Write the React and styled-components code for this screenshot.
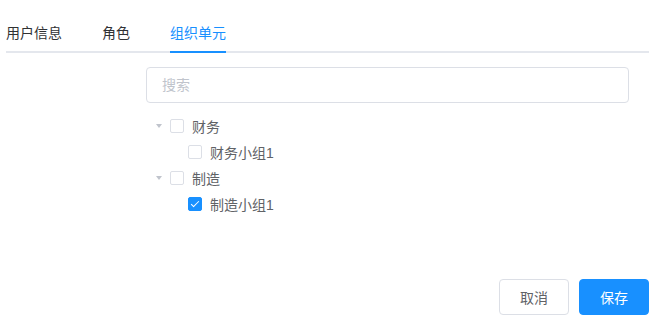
import React, { useState } from "react"
import styled, { createGlobalStyle } from "styled-components"

const GlobalStyle = createGlobalStyle`
  html, body {
    margin: 0;
    padding: 0;
    background: #fff;
  }
  body {
    font-family: "Liberation Sans", "Noto Sans CJK SC", sans-serif;
    font-size: 14px;
    color: #606266;
  }
`

const Page = styled.div`
  height: 321px;
  box-sizing: border-box;
  padding: 13px 11px 6px 6px;
  display: flex;
  flex-direction: column;
`

const TabNav = styled.div`
  position: relative;
  display: flex;
  height: 40px;
  margin-bottom: 14px;

  &::after {
    content: "";
    position: absolute;
    left: 0;
    right: 0;
    bottom: 0;
    height: 2px;
    background: #e4e7ed;
  }
`

const Tab = styled.div`
  position: relative;
  padding: 0 20px;
  height: 40px;
  line-height: 40px;
  font-size: 14px;
  color: ${(p) => (p.$active ? "#1890ff" : "#303133")};
  cursor: pointer;

  &:first-child {
    padding-left: 0;
  }

  &::after {
    content: "";
    display: ${(p) => (p.$active ? "block" : "none")};
    position: absolute;
    left: 20px;
    right: 20px;
    bottom: 0;
    height: 2px;
    background: #1890ff;
    z-index: 1;
  }
`

const Body = styled.div`
  padding-left: 140px;
  padding-right: 20px;
`

const SearchInput = styled.input`
  display: block;
  width: 100%;
  box-sizing: border-box;
  height: 36px;
  padding: 0 15px;
  border: 1px solid #dcdfe6;
  border-radius: 4px;
  font-family: inherit;
  font-size: 14px;
  color: #606266;
  outline: none;

  &::placeholder {
    color: #c0c4cc;
  }
`

const Tree = styled.div`
  margin-top: 10px;
`

const NodeRow = styled.div`
  display: flex;
  align-items: center;
  height: 26px;
  padding-left: ${(p) => p.$level * 18}px;
  color: #606266;
  font-size: 14px;
`

const Expand = styled.span`
  width: 24px;
  height: 24px;
  display: flex;
  align-items: center;
  justify-content: center;

  &::before {
    content: "";
    display: ${(p) => (p.$leaf ? "none" : "block")};
    width: 0;
    height: 0;
    border-left: 3px solid transparent;
    border-right: 3px solid transparent;
    border-top: 4px solid #c0c4cc;
    margin-left: 1px;
  }
`

const Box = styled.span`
  position: relative;
  width: 14px;
  height: 14px;
  box-sizing: border-box;
  border: 1px solid ${(p) => (p.$checked ? "#1890ff" : "#dcdfe6")};
  background: ${(p) => (p.$checked ? "#1890ff" : "#fff")};
  border-radius: 2px;
  margin-right: 8px;

  &::after {
    content: "";
    display: ${(p) => (p.$checked ? "block" : "none")};
    position: absolute;
    left: 4px;
    top: 1px;
    width: 3px;
    height: 7px;
    border: 1px solid #fff;
    border-left: 0;
    border-top: 0;
    transform: rotate(45deg);
  }
`

const Footer = styled.div`
  margin-top: auto;
  display: flex;
  justify-content: flex-end;
  gap: 10px;
`

const Button = styled.button`
  height: 36px;
  padding: 0 20px;
  border-radius: 4px;
  font-family: inherit;
  font-size: 14px;
  border: 1px solid ${(p) => (p.$primary ? "#1890ff" : "#dcdfe6")};
  background: ${(p) => (p.$primary ? "#1890ff" : "#fff")};
  color: ${(p) => (p.$primary ? "#fff" : "#606266")};
  cursor: pointer;
`

const nodes = [
  { label: "财务", level: 0, checked: false },
  { label: "财务小组1", level: 1, leaf: true, checked: false },
  { label: "制造", level: 0, checked: false },
  { label: "制造小组1", level: 1, leaf: true, checked: true },
]

const tabs = ["用户信息", "角色", "组织单元"]

export default function App() {
  const [active, setActive] = useState(2)

  return (
    <>
      <GlobalStyle />
      <Page>
        <TabNav>
          {tabs.map((t, i) => (
            <Tab key={t} $active={i === active} onClick={() => setActive(i)}>
              {t}
            </Tab>
          ))}
        </TabNav>
        <Body>
          <SearchInput placeholder="搜索" />
          <Tree>
            {nodes.map((n) => (
              <NodeRow key={n.label} $level={n.level}>
                <Expand $leaf={n.leaf} />
                <Box $checked={n.checked} />
                <span>{n.label}</span>
              </NodeRow>
            ))}
          </Tree>
        </Body>
        <Footer>
          <Button>取消</Button>
          <Button $primary>保存</Button>
        </Footer>
      </Page>
    </>
  )
}
